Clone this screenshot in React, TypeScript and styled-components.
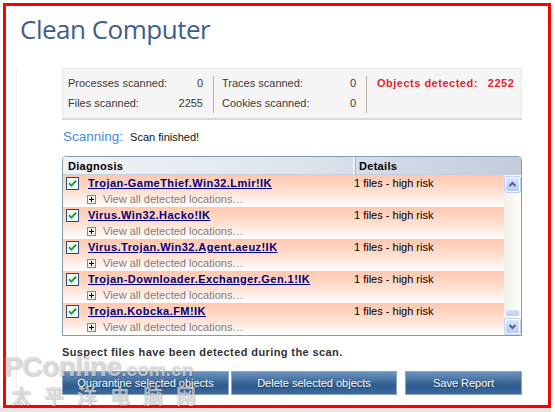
import styled, { createGlobalStyle } from "styled-components";

const GlobalStyle = createGlobalStyle`
  html, body {
    margin: 0;
    padding: 0;
    background: #ffffff;
  }
  body {
    font-family: "Liberation Sans", Arial, sans-serif;
    font-size: 11px;
    color: #333333;
  }
`;

interface Threat {
  name: string;
  details: string;
}

const threats: Threat[] = [
  { name: "Trojan-GameThief.Win32.Lmir!IK", details: "1 files - high risk" },
  { name: "Virus.Win32.Hacko!IK", details: "1 files - high risk" },
  { name: "Virus.Trojan.Win32.Agent.aeuz!IK", details: "1 files - high risk" },
  { name: "Trojan-Downloader.Exchanger.Gen.1!IK", details: "1 files - high risk" },
  { name: "Trojan.Kobcka.FM!IK", details: "1 files - high risk" },
];

const CheckIcon = () => (
  <svg width="13" height="13" viewBox="0 0 13 13">
    <rect x="0.5" y="0.5" width="12" height="12" fill="#f6f6f3" stroke="#1c5180" />
    <path d="M3 6.2 L5.4 8.6 L10 3.8" fill="none" stroke="#21a121" strokeWidth="2" />
  </svg>
);

const PlusIcon = () => (
  <svg width="9" height="9" viewBox="0 0 9 9">
    <rect x="0.5" y="0.5" width="8" height="8" fill="#f4f4f0" stroke="#7b8793" />
    <path d="M2 4.5 H7 M4.5 2 V7" stroke="#000" strokeWidth="1" />
  </svg>
);

const Chevron = ({ down }: { down?: boolean }) => (
  <svg width="13" height="13" viewBox="0 0 13 13">
    <path
      d={down ? "M3.5 5 L6.5 8 L9.5 5" : "M3.5 8 L6.5 5 L9.5 8"}
      fill="none"
      stroke="#4d6185"
      strokeWidth="2"
    />
  </svg>
);

export default function App() {
  return (
    <Page>
      <GlobalStyle />
      <Frame>
        <Title>Clean Computer</Title>
        <Panel>
          <Content>
            <StatsPanel>
              <StatGroup $width={135} $pl={0} $pr={10}>
                <span>Processes scanned:</span>
                <StatValue>0</StatValue>
                <span>Files scanned:</span>
                <StatValue>2255</StatValue>
              </StatGroup>
              <Divider />
              <StatGroup $width={134} $pl={8} $pr={10}>
                <span>Traces scanned:</span>
                <StatValue>0</StatValue>
                <span>Cookies scanned:</span>
                <StatValue>0</StatValue>
              </StatGroup>
              <Divider />
              <Detected>
                <span>Objects detected:</span>
                <span>2252</span>
              </Detected>
            </StatsPanel>

            <ScanLine>
              <ScanLabel>Scanning:</ScanLabel>
              <span>Scan finished!</span>
            </ScanLine>

            <Table>
              <TableHeader>
                <HeaderCell>Diagnosis</HeaderCell>
                <HeaderCell $sep>Details</HeaderCell>
              </TableHeader>
              <TableBody>
                <Rows>
                  {threats.map((t) => (
                    <Row key={t.name}>
                      <MainLine>
                        <NameCell>
                          <CheckIcon />
                          <ThreatLink>{t.name}</ThreatLink>
                        </NameCell>
                        <span>{t.details}</span>
                      </MainLine>
                      <SubLine>
                        <PlusIcon />
                        <span>View all detected locations…</span>
                      </SubLine>
                    </Row>
                  ))}
                </Rows>
                <ScrollTrack>
                  <ScrollButton>
                    <Chevron />
                  </ScrollButton>
                  <ScrollSpacer />
                  <ScrollThumb />
                  <ScrollButton>
                    <Chevron down />
                  </ScrollButton>
                </ScrollTrack>
              </TableBody>
            </Table>

            <Notice>Suspect files have been detected during the scan.</Notice>

            <ButtonRow>
              <ActionButton $width={167}>Quarantine selected objects</ActionButton>
              <ActionButton $width={166}>Delete selected objects</ActionButton>
              <ActionButton $width={117} $gap={8}>
                Save Report
              </ActionButton>
            </ButtonRow>
          </Content>
        </Panel>
      </Frame>
      <BottomShade />
      <Watermark>
        <WatermarkLogo>
          PConline<small>.com.cn</small>
        </WatermarkLogo>
        <WatermarkCn>太平洋电脑网</WatermarkCn>
      </Watermark>
    </Page>
  );
}

const Page = styled.div`
  position: relative;
  width: 555px;
  height: 412px;
  overflow: hidden;
  padding-top: 3px;
  box-sizing: border-box;
`;

const Frame = styled.div`
  width: 548px;
  height: 405px;
  margin-left: 3px;
  box-sizing: border-box;
  border: 3px solid #ff0000;
  background: #ffffff;
`;

const BottomShade = styled.div`
  width: 551px;
  height: 4px;
  background: #e4e4e4;
`;

const Title = styled.h1`
  margin: 0;
  padding: 6px 0 0 14px;
  height: 34px;
  font-family: "Open Sans", "Noto Sans", sans-serif;
  font-weight: 400;
  font-size: 26px;
  letter-spacing: -0.5px;
  line-height: 34px;
  color: #3e5e8e;
`;

const Panel = styled.div`
  margin: 22px 0 0 10px;
  padding-left: 45px;
  border-left: 1px solid #f1f1f1;
`;

const Content = styled.div`
  width: 460px;
`;

const StatsPanel = styled.div`
  display: flex;
  height: 52px;
  box-sizing: border-box;
  padding: 4px 0 0 5px;
  background: #f5f5f5;
  border: 1px solid #e8e8e8;
  border-bottom: 2px solid #d9d9d9;
  color: #3a3a3a;
`;

const StatGroup = styled.div<{ $width: number; $pl: number; $pr: number }>`
  display: grid;
  grid-template-columns: 1fr auto;
  grid-auto-rows: 20px;
  align-items: center;
  flex-shrink: 0;
  width: ${({ $width }) => $width}px;
  padding-left: ${({ $pl }) => $pl}px;
  padding-right: ${({ $pr }) => $pr}px;
`;

const StatValue = styled.span`
  justify-self: end;
`;

const Divider = styled.div`
  width: 1px;
  height: 37px;
  margin-top: 3px;
  background: #b8b19c;
`;

const Detected = styled.div`
  display: flex;
  gap: 10px;
  height: 20px;
  align-items: center;
  padding-left: 10px;
  font-weight: bold;
  letter-spacing: 0.5px;
  color: #e3262e;
`;

const ScanLine = styled.div`
  display: flex;
  align-items: baseline;
  gap: 7px;
  height: 16px;
  margin-top: 9px;
  padding-left: 1px;
  color: #111;
`;

const ScanLabel = styled.span`
  font-size: 13.5px;
  color: #4b8bd6;
`;

const Table = styled.div`
  margin-top: 11px;
  border: 1px solid #7f9db9;
  border-radius: 4px 4px 0 0;
  overflow: hidden;
  background: #ffffff;
`;

const TableHeader = styled.div`
  display: grid;
  grid-template-columns: 290px 1fr;
  height: 18px;
  align-items: center;
  background: linear-gradient(to right, #f1f3f7 0%, #dfe4ed 50%, #c3ccdd 100%);
  border-bottom: 1px solid #c5cedd;
  box-sizing: border-box;
`;

const HeaderCell = styled.div<{ $sep?: boolean }>`
  height: 100%;
  display: flex;
  align-items: center;
  padding-left: ${({ $sep }) => ($sep ? 4 : 5)}px;
  font-weight: bold;
  letter-spacing: 0.3px;
  color: #000;
  border-left: ${({ $sep }) => ($sep ? "2px solid #eef1f7" : "none")};
  box-shadow: ${({ $sep }) => ($sep ? "inset 1px 0 0 #a9b7ce" : "none")};
`;

const TableBody = styled.div`
  display: flex;
  height: 160px;
`;

const Rows = styled.div`
  width: 441px;
`;

const Row = styled.div`
  height: 32px;
  background: linear-gradient(#ffc7ae 0%, #ffdccd 45%, #ffffff 100%);
`;

const MainLine = styled.div`
  display: grid;
  grid-template-columns: 291px 1fr;
  height: 16px;
  align-items: center;
  color: #000;
`;

const NameCell = styled.div`
  display: flex;
  align-items: center;
  gap: 9px;
  padding-left: 3px;
  white-space: nowrap;
`;

const ThreatLink = styled.a`
  font-weight: bold;
  letter-spacing: 0.45px;
  color: #00007f;
  text-decoration: underline;
  cursor: pointer;
`;

const SubLine = styled.div`
  display: flex;
  align-items: center;
  gap: 7px;
  height: 16px;
  padding-left: 24px;
  color: #808080;
`;

const ScrollTrack = styled.div`
  display: flex;
  flex-direction: column;
  width: 17px;
  background: linear-gradient(to right, #f1f0ea, #fdfdfa);
`;

const ScrollButton = styled.div`
  width: 15px;
  height: 15px;
  margin: 2px 0 1px 1px;
  box-sizing: border-box;
  display: flex;
  align-items: center;
  justify-content: center;
  border: 1px solid #ffffff;
  border-radius: 2px;
  background: linear-gradient(#dbe5fd, #b9cbf5);
  box-shadow: 0 0 0 1px #c2d1f3;
`;

const ScrollSpacer = styled.div`
  flex: 1;
`;

const ScrollThumb = styled.div`
  width: 15px;
  height: 8px;
  margin-left: 1px;
  border-radius: 2px;
  background: linear-gradient(#d2defb, #bccdf4);
  border: 1px solid #ffffff;
  box-sizing: border-box;
`;

const Notice = styled.div`
  margin-top: 8px;
  height: 16px;
  line-height: 16px;
  font-weight: bold;
  letter-spacing: 0.4px;
  color: #333;
`;

const ButtonRow = styled.div`
  display: flex;
  margin-top: 11px;
`;

const ActionButton = styled.button<{ $width: number; $gap?: number }>`
  width: ${({ $width }) => $width}px;
  height: 24px;
  margin-left: ${({ $gap }) => $gap ?? 2}px;
  &:first-child {
    margin-left: 0;
  }
  padding: 0;
  border: 1px solid #8ea7c6;
  background: linear-gradient(#6b93c1 0%, #44709f 40%, #2f5b8c 60%, #3b6aa0 100%);
  color: #ffffff;
  font-family: "Liberation Sans", Arial, sans-serif;
  font-size: 11px;
  text-shadow: 0 1px 1px #1b3457;
  cursor: pointer;
`;

const Watermark = styled.div`
  position: absolute;
  left: 4px;
  top: 354px;
  pointer-events: none;
  color: rgba(255, 255, 255, 0.65);
  text-shadow: 0 0 1px rgba(0, 0, 0, 0.3), 1px 1px 1px rgba(0, 0, 0, 0.15);
`;

const WatermarkLogo = styled.div`
  font-family: "Liberation Sans", Arial, sans-serif;
  font-weight: bold;
  font-size: 28px;
  line-height: 26px;
  letter-spacing: -0.5px;
  small {
    font-size: 19px;
    letter-spacing: 0;
  }
`;

const WatermarkCn = styled.div`
  margin-top: 1px;
  padding-left: 7px;
  font-family: "Noto Sans CJK SC", sans-serif;
  font-weight: bold;
  font-size: 20px;
  line-height: 24px;
  letter-spacing: 13px;
`;
